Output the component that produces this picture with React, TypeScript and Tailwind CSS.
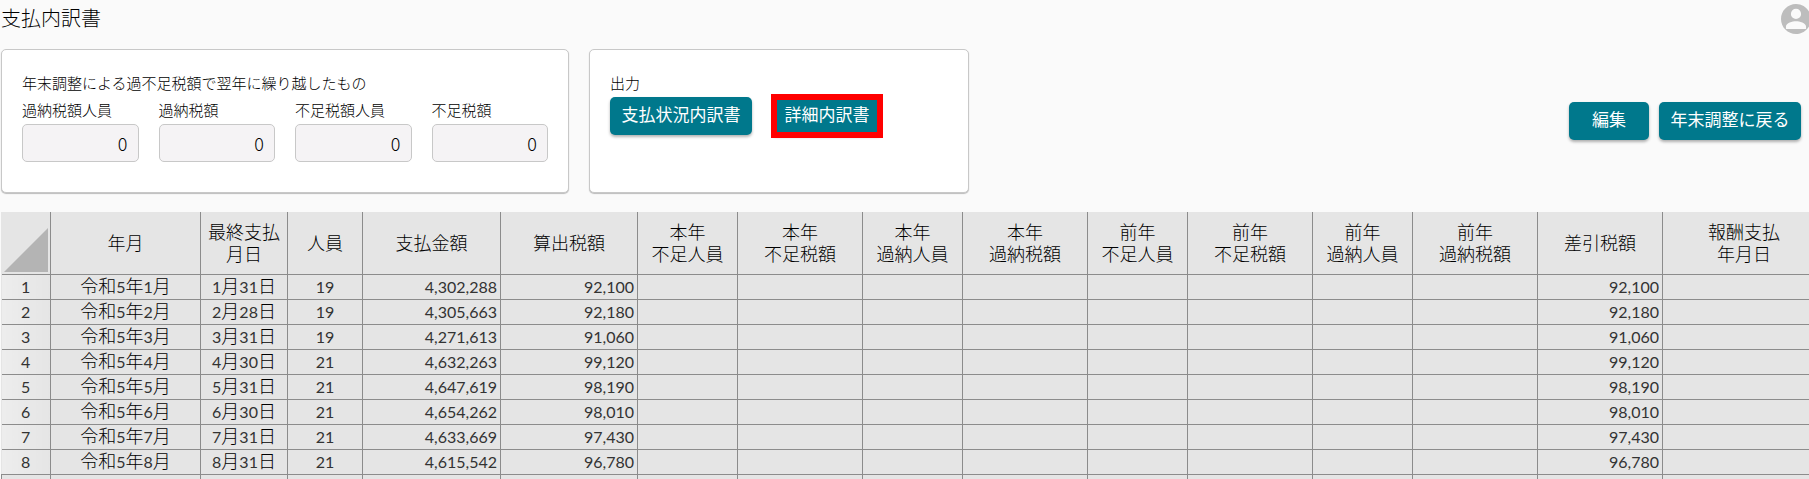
import React from "react";

const uiFont = "font-['Noto_Sans_CJK_JP',sans-serif]";
const sheetFont = "font-[Lato,'Noto_Sans_CJK_JP',sans-serif]";

const carryOver = [
  { id: "over-count", label: "過納税額人員" },
  { id: "over-tax", label: "過納税額" },
  { id: "short-count", label: "不足税額人員" },
  { id: "short-tax", label: "不足税額" },
];

const columns = [
  { width: "w-[49px]", title: "" },
  { width: "w-[150px]", title: "年月" },
  { width: "w-[87px]", title: "最終支払\n月日" },
  { width: "w-[75px]", title: "人員" },
  { width: "w-[138px]", title: "支払金額" },
  { width: "w-[137px]", title: "算出税額" },
  { width: "w-[100px]", title: "本年\n不足人員" },
  { width: "w-[125px]", title: "本年\n不足税額" },
  { width: "w-[100px]", title: "本年\n過納人員" },
  { width: "w-[125px]", title: "本年\n過納税額" },
  { width: "w-[100px]", title: "前年\n不足人員" },
  { width: "w-[125px]", title: "前年\n不足税額" },
  { width: "w-[100px]", title: "前年\n過納人員" },
  { width: "w-[125px]", title: "前年\n過納税額" },
  { width: "w-[125px]", title: "差引税額" },
  { width: "w-[163px]", title: "報酬支払\n年月日" },
];

const rows = [
  { month: "令和5年1月", paidOn: "1月31日", count: 19, amount: "4,302,288", tax: "92,100" },
  { month: "令和5年2月", paidOn: "2月28日", count: 19, amount: "4,305,663", tax: "92,180" },
  { month: "令和5年3月", paidOn: "3月31日", count: 19, amount: "4,271,613", tax: "91,060" },
  { month: "令和5年4月", paidOn: "4月30日", count: 21, amount: "4,632,263", tax: "99,120" },
  { month: "令和5年5月", paidOn: "5月31日", count: 21, amount: "4,647,619", tax: "98,190" },
  { month: "令和5年6月", paidOn: "6月30日", count: 21, amount: "4,654,262", tax: "98,010" },
  { month: "令和5年7月", paidOn: "7月31日", count: 21, amount: "4,633,669", tax: "97,430" },
  { month: "令和5年8月", paidOn: "8月31日", count: 21, amount: "4,615,542", tax: "96,780" },
];

const ActionButton = ({
  children,
  className = "",
}: {
  children: React.ReactNode;
  className?: string;
}) => (
  <button
    type="button"
    className={`h-[38px] bg-[#00788c] pb-1 text-[17px] leading-6 font-normal whitespace-nowrap text-white shadow-[0_2px_3px_rgba(0,0,0,0.3)] ${className}`}
  >
    {children}
  </button>
);

// Digits are set a little smaller than the kanji around them
const DateText = ({ text }: { text: string }) => (
  <span className="text-lg leading-5 font-light text-black">
    {text.split(/(\d+)/).map((part, i) =>
      /\d/.test(part) ? (
        <span key={i} className="text-base leading-5 font-normal text-[#333333]">
          {part}
        </span>
      ) : (
        part
      )
    )}
  </span>
);

const Cell = ({
  children,
  className = "text-center",
}: {
  children?: React.ReactNode;
  className?: string;
}) => (
  <td className={`border border-[#8c8c8c] p-0 ${className}`}>{children}</td>
);

const PaymentTable = () => (
  <div className="overflow-hidden pl-px">
    <table
      className={`w-[1824px] table-fixed border-collapse bg-[#e5e5e5] text-base leading-5 font-normal whitespace-nowrap text-[#333333] ${sheetFont}`}
    >
      <colgroup>
        {columns.map((column, i) => (
          <col key={i} className={column.width} />
        ))}
      </colgroup>
      <thead>
        <tr className="h-[62px]">
          {columns.map((column, i) =>
            i === 0 ? (
              <td key={i} className="border-r border-b border-[#8c8c8c] p-0 align-bottom">
                <svg viewBox="0 0 44 44" className="mb-[2px] ml-[2px] size-11" aria-hidden="true">
                  <path d="M44 0V44H0Z" fill="#b4b4b4" />
                </svg>
              </td>
            ) : (
              <th
                key={i}
                scope="col"
                className="border-x border-b border-[#8c8c8c] p-0 text-lg leading-[22px] font-light whitespace-pre-line text-black"
              >
                {column.title}
              </th>
            )
          )}
        </tr>
      </thead>
      <tbody>
        {rows.map((row, i) => (
          <tr key={row.month} className="h-[25px]">
            <th
              scope="row"
              className="border-y border-r border-[#8c8c8c] bg-linear-to-r from-[#ededed] to-[#e5e5e5] p-0 font-normal"
            >
              {i + 1}
            </th>
            <Cell>
              <DateText text={row.month} />
            </Cell>
            <Cell>
              <DateText text={row.paidOn} />
            </Cell>
            <Cell>{row.count}</Cell>
            <Cell className="pr-[3px] text-right">{row.amount}</Cell>
            <Cell className="pr-[3px] text-right">{row.tax}</Cell>
            {columns.slice(6, 14).map((column) => (
              <Cell key={column.title} />
            ))}
            <Cell className="pr-[3px] text-right">{row.tax}</Cell>
            <Cell />
          </tr>
        ))}
        {/* next month, still empty */}
        <tr className="h-[25px]">
          {columns.map((column, i) => (
            <Cell key={i} />
          ))}
        </tr>
      </tbody>
    </table>
  </div>
);

export default function App() {
  return (
    <div className={`h-screen overflow-hidden bg-[#fafafa] font-light text-black ${uiFont}`}>
      <header className="flex h-[49px] items-start justify-between pt-1">
        <h1 className="pl-px text-xl leading-7 font-light">支払内訳書</h1>
        <button type="button" aria-label="アカウント" className="-mr-0.5 shrink-0">
          <svg viewBox="2 2 20 20" className="size-[30px]" fill="#bdbdbd" aria-hidden="true">
            <path d="M12 2C6.480 2 2 6.480 2 12s4.480 10 10 10 10-4.480 10-10S17.520 2 12 2zm0 3.200a3.400 3.400 0 1 1 0 6.800a3.400 3.400 0 0 1 0-6.800zM5.300 18.700v-1.700c0-2.400 4.400-3.500 6.700-3.500s6.700 1.100 6.700 3.500v1.700z" />
          </svg>
        </button>
      </header>

      <main>
        <div className="mb-[19px] flex items-center">
          <section className="ml-px h-36 w-[568px] shrink-0 rounded-[5px] border border-[#c8c8c8] bg-white px-5 pt-[23px] shadow-[0_1px_1px_rgba(0,0,0,0.25)]">
            <h2 className="text-[15px] leading-5 font-light">
              年末調整による過不足税額で翌年に繰り越したもの
            </h2>
            <div className="mt-[7px] grid grid-cols-4 gap-x-5">
              {carryOver.map(({ id, label }) => (
                <div key={id}>
                  <label htmlFor={id} className="block text-[15px] leading-5 whitespace-nowrap">
                    {label}
                  </label>
                  <input
                    id={id}
                    readOnly
                    defaultValue="0"
                    className="mt-1 h-[38px] w-full rounded-[5px] border border-[#c8c8c8] bg-[#f5f3f5] pr-[10px] text-right text-lg leading-6 font-light"
                  />
                </div>
              ))}
            </div>
          </section>

          <section className="ml-5 h-36 w-[380px] shrink-0 rounded-[5px] border border-[#c8c8c8] bg-white px-5 pt-[23px] shadow-[0_1px_1px_rgba(0,0,0,0.25)]">
            <h2 className="text-[15px] leading-5 font-light">出力</h2>
            <div className="mt-1 flex items-start gap-[22px]">
              <ActionButton className="w-[142px] rounded-[5px]">支払状況内訳書</ActionButton>
              <ActionButton className="w-[106px] outline-6 -outline-offset-3 outline-[#ff0000]">
                詳細内訳書
              </ActionButton>
            </div>
          </section>

          <div className="ml-auto flex gap-[10px] pr-2">
            <ActionButton className="w-20 rounded-[5px]">編集</ActionButton>
            <ActionButton className="w-[142px] rounded-[5px]">年末調整に戻る</ActionButton>
          </div>
        </div>

        <PaymentTable />
      </main>
    </div>
  );
}
